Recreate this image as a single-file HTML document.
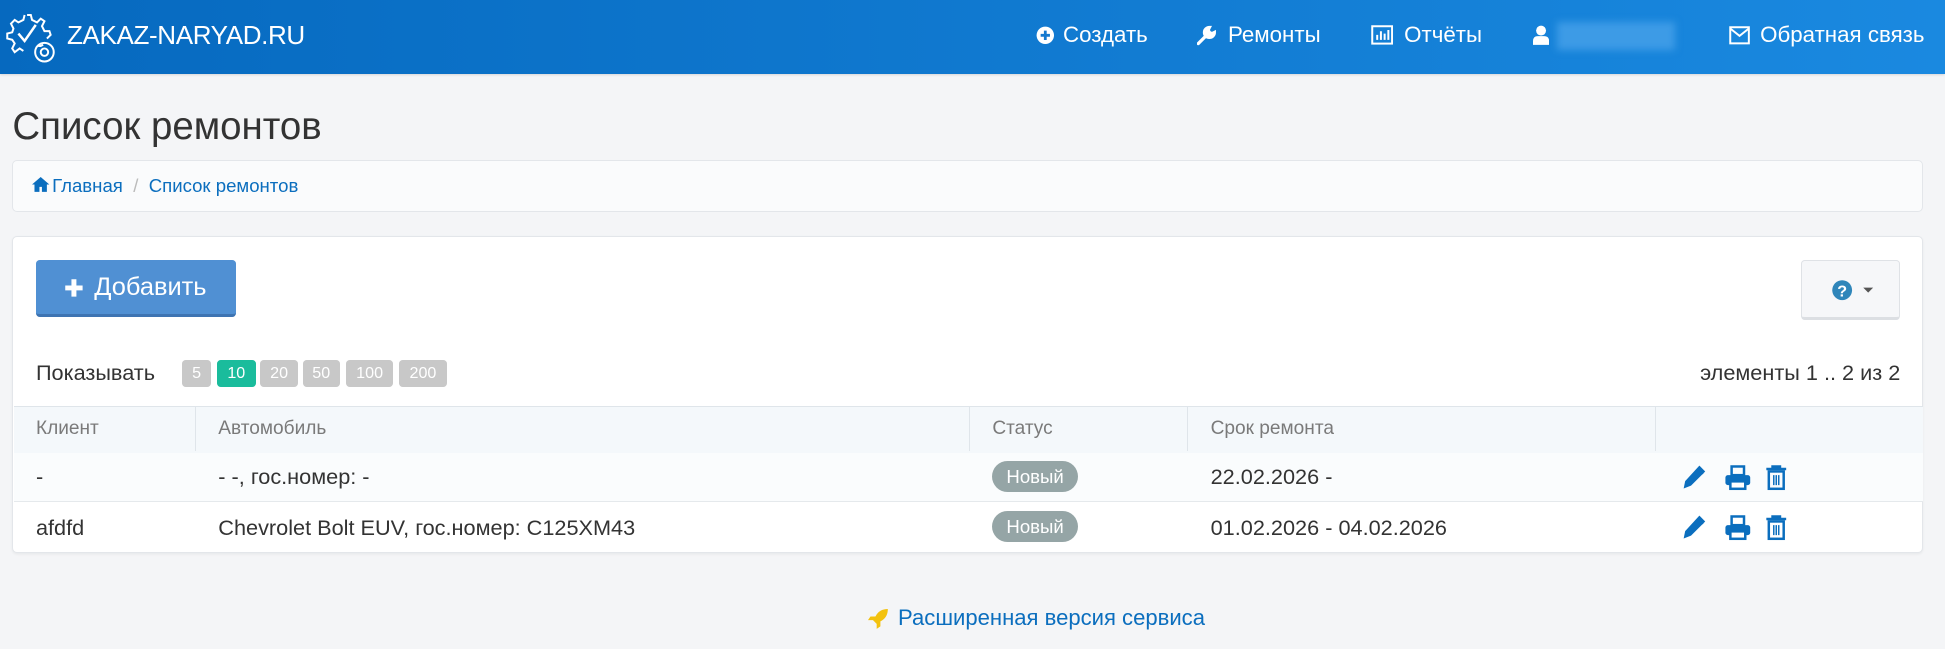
<!DOCTYPE html>
<html><head><meta charset="utf-8"><style>
html,body{margin:0;padding:0;}
body{width:1568px;height:523px;overflow:hidden;zoom:1.2404;background:#f4f5f7;font-family:"Liberation Sans","Noto Sans CJK SC",sans-serif;color:#333;position:relative;}
.abs{position:absolute;white-space:nowrap;}
.nav{position:absolute;left:0;top:0;width:1568px;height:60px;background:linear-gradient(90deg,#0669bf,#1a89e0);box-shadow:0 1px 2px rgba(0,0,0,.15);}
.nav .t{color:#fff;font-size:18px;top:18px;}
.brand{color:#fff;font-size:21px;left:54px;top:16px;letter-spacing:-0.3px;}
.title{left:10px;top:85px;font-size:31px;color:#333;}
.bc{position:absolute;left:10px;top:129px;width:1539px;height:40px;background:#fafbfc;border:1px solid #e3e6ea;border-radius:4px;}
.card{position:absolute;left:10px;top:190px;width:1539px;height:254px;background:#fff;border:1px solid #e3e6ea;border-radius:4px;box-shadow:0 1px 2px rgba(0,0,0,.05);}
.add{position:absolute;left:29px;top:210px;width:161px;height:43px;background:#5090d3;border-bottom:3px solid #3e74b2;border-radius:3px;color:#fff;font-size:20.5px;}
.help{position:absolute;left:1452px;top:210px;width:78px;height:45px;background:#f6f7f9;border:1px solid #dfe2e6;border-bottom:3px solid #dcdfe3;border-radius:3px;}
.b{position:absolute;top:290px;height:22px;background:#c8c8c8;color:#fff;font-size:13px;text-align:center;line-height:22px;border-radius:3px;}
.th{position:absolute;left:11px;top:327px;width:1539px;height:37px;background:#f4f8fb;border-top:1px solid #dfe5ea;border-bottom:1px solid #dfe5ea;}
.r1{position:absolute;left:11px;top:365px;width:1539px;height:39px;background:#fafcfd;border-bottom:1px solid #e5e9ec;}
.vl{position:absolute;top:328px;width:1px;height:36px;background:#dfe5ea;}
.h{font-size:15.4px;color:#7a7a7a;top:337px;}
.c{font-size:17.5px;color:#333;}
.st{position:absolute;left:800px;width:69px;height:25px;border-radius:13px;background:#95a5a6;color:#fff;font-size:15px;text-align:center;line-height:25px;}
.lnk{color:#0b6ebe;}
</style></head><body>
<div class="nav">
<svg class="abs" style="left:5px;top:8px" width="42" height="44" viewBox="0 0 42 44" fill="none" stroke="#fff" stroke-width="1.6">
<path d="M17 4l3-0 1 4 4 2 3-3 3 2-2 4 2 4 4 0 1 3-3 3M30 28l-2 1-2 0M14 33l-3-2-4 3-2-3 2-4-2-3-4-1v-4l4-1 1-3-2-4 3-3 3 2 4-2 1-4"/>
<path d="M10 19l5 6 9-13" stroke-width="2"/>
<circle cx="31" cy="34" r="7.5"/><circle cx="31" cy="34" r="3"/>
</svg>
<div class="abs brand">ZAKAZ-NARYAD.RU</div>
<svg class="abs" style="left:835px;top:21px" width="15" height="15" viewBox="0 0 16 16"><circle cx="8" cy="8" r="7.5" fill="#fff"/><path d="M8 4v8M4 8h8" stroke="#1479cf" stroke-width="2.4"/></svg>
<div class="abs t" style="left:857px">Создать</div>
<svg class="abs" style="left:965px;top:20px" width="16" height="17" viewBox="0 0 16 17"><path d="M1 15l8-8M10 2a4 4 0 1 0 4 4l-2 1-2-1-1-2z" stroke="#fff" stroke-width="2.6" fill="#fff" stroke-linecap="round"/></svg>
<div class="abs t" style="left:990px">Ремонты</div>
<svg class="abs" style="left:1105px;top:20px" width="18" height="16" viewBox="0 0 18 16"><rect x="1" y="1" width="16" height="14" fill="none" stroke="#fff" stroke-width="1.6"/><path d="M5 12V8M8 12V5M11 12V7M14 12V4" stroke="#fff" stroke-width="1.6"/></svg>
<div class="abs t" style="left:1132px">Отчёты</div>
<svg class="abs" style="left:1236px;top:20px" width="13" height="16" viewBox="0 0 13 16"><circle cx="6.5" cy="4.5" r="4" fill="#fff"/><path d="M0 16v-3q0-4 4-4h5q4 0 4 4v3z" fill="#fff"/></svg>
<div class="abs" style="left:1255px;top:18px;width:95px;height:22px;background:#3d9be6;filter:blur(3px)"></div>
<svg class="abs" style="left:1394px;top:21px" width="17" height="15" viewBox="0 0 17 15"><rect x="1" y="1" width="15" height="13" fill="none" stroke="#fff" stroke-width="1.6"/><path d="M1 2l7.5 6L16 2" fill="none" stroke="#fff" stroke-width="1.6"/></svg>
<div class="abs t" style="left:1419px">Обратная связь</div>
</div>

<div class="abs title">Список ремонтов</div>
<div class="bc"></div>
<svg class="abs" style="left:26px;top:143px" width="14" height="12" viewBox="0 0 14 12"><path d="M7 0L0 6h2v6h4V8h2v4h4V6h2z" fill="#0b6ebe"/></svg>
<div class="abs lnk" style="left:42px;top:141px;font-size:15px">Главная <span style="color:#bbb">&nbsp;/&nbsp;</span> Список ремонтов</div>

<div class="card"></div>
<div class="add"><svg class="abs" style="left:23px;top:14px" width="16" height="16" viewBox="0 0 16 16"><path d="M8 1v14M1 8h14" stroke="#fff" stroke-width="4"/></svg><span class="abs" style="left:47px;top:10px">Добавить</span></div>
<div class="help"><svg class="abs" style="left:23px;top:14px" width="36" height="18" viewBox="0 0 36 18"><circle cx="9" cy="9" r="8" fill="#2f86ba"/><text x="9" y="14" font-size="13" font-weight="bold" fill="#fff" text-anchor="middle" font-family="Liberation Sans">?</text><path d="M26 7h8l-4 4z" fill="#555"/></svg></div>

<div class="abs" style="left:29px;top:290px;font-size:17.5px">Показывать</div>
<div class="b" style="left:147px;width:23px">5</div>
<div class="b" style="left:175px;width:31px;background:#1abc9c">10</div>
<div class="b" style="left:210px;width:30px">20</div>
<div class="b" style="left:244px;width:30px">50</div>
<div class="b" style="left:279px;width:38px">100</div>
<div class="b" style="left:322px;width:38px">200</div>
<div class="abs" style="right:36px;top:290px;font-size:17.5px">элементы 1 .. 2 из 2</div>

<div class="th"></div>
<div class="vl" style="left:157px"></div><div class="vl" style="left:781px"></div><div class="vl" style="left:957px"></div><div class="vl" style="left:1334px"></div>
<div class="abs h" style="left:29px">Клиент</div>
<div class="abs h" style="left:176px">Автомобиль</div>
<div class="abs h" style="left:800px">Статус</div>
<div class="abs h" style="left:976px">Срок ремонта</div>
<div class="r1"></div>

<div class="abs c" style="left:29px;top:374px">-</div>
<div class="abs c" style="left:176px;top:374px">- -, гос.номер: -</div>
<div class="st" style="top:372px">Новый</div>
<div class="abs c" style="left:976px;top:374px">22.02.2026 -</div>

<div class="abs c" style="left:29px;top:415px">afdfd</div>
<div class="abs c" style="left:176px;top:415px">Chevrolet Bolt EUV, гос.номер: С125ХМ43</div>
<div class="st" style="top:412px">Новый</div>
<div class="abs c" style="left:976px;top:415px">01.02.2026 - 04.02.2026</div>

<svg class="abs" style="left:1356px;top:374px" width="90" height="22" viewBox="0 0 90 22" fill="#0b6ebe">
<path d="M14 2l4 4-11 11-5 2 1-5z M13 4l4 4" stroke="#0b6ebe"/>
<rect x="40" y="2" width="10" height="7" fill="none" stroke="#0b6ebe" stroke-width="2"/><rect x="35" y="9" width="20" height="8" rx="2"/><rect x="39" y="14" width="12" height="6" fill="#fff" stroke="#0b6ebe" stroke-width="2"/>
<path d="M68 4h16M73 4V2h6v2" stroke="#0b6ebe" stroke-width="2" fill="none"/><rect x="70" y="6" width="12" height="14" fill="none" stroke="#0b6ebe" stroke-width="2"/><path d="M74 9v8M76 9v8M78 9v8" stroke="#0b6ebe" stroke-width="1.2"/>
</svg>
<svg class="abs" style="left:1356px;top:414px" width="90" height="22" viewBox="0 0 90 22" fill="#0b6ebe">
<path d="M14 2l4 4-11 11-5 2 1-5z M13 4l4 4" stroke="#0b6ebe"/>
<rect x="40" y="2" width="10" height="7" fill="none" stroke="#0b6ebe" stroke-width="2"/><rect x="35" y="9" width="20" height="8" rx="2"/><rect x="39" y="14" width="12" height="6" fill="#fff" stroke="#0b6ebe" stroke-width="2"/>
<path d="M68 4h16M73 4V2h6v2" stroke="#0b6ebe" stroke-width="2" fill="none"/><rect x="70" y="6" width="12" height="14" fill="none" stroke="#0b6ebe" stroke-width="2"/><path d="M74 9v8M76 9v8M78 9v8" stroke="#0b6ebe" stroke-width="1.2"/>
</svg>

<svg class="abs" style="left:700px;top:491px" width="17" height="16" viewBox="0 0 17 16"><path d="M16 0q-7 0-10 6H2L0 9h4l3 3v4l3-2v-4q6-3 6-10z" fill="#f3c20f"/></svg>
<div class="abs lnk" style="left:724px;top:488px;font-size:17.8px">Расширенная версия сервиса</div>
</body></html>
